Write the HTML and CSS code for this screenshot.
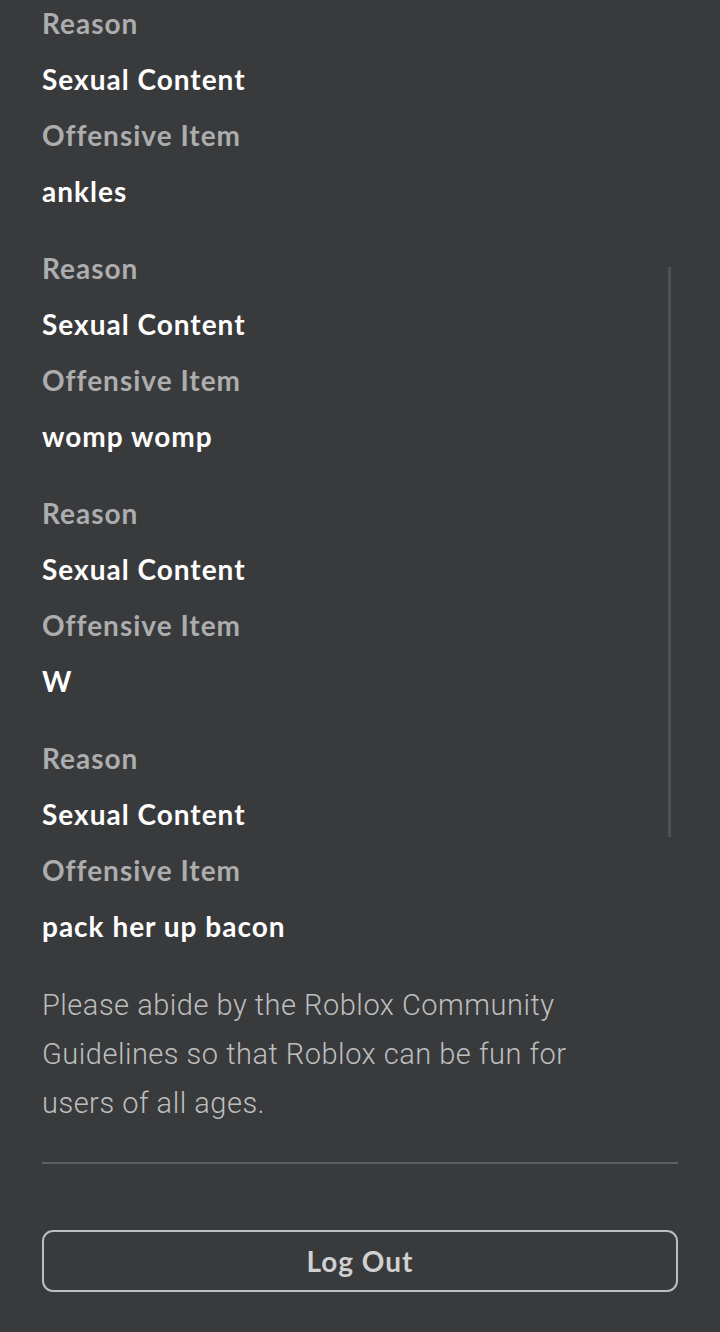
FILE: index.html
```html
<!DOCTYPE html>
<html>
<head>
  <title>Account moderation</title>
  <link rel="stylesheet" href="styles.css">
</head>
<body>
  <div class="page">
    <div class="reports">
      <div class="report">
        <div class="label">Reason</div>
        <div class="value">Sexual Content</div>
        <div class="label">Offensive Item</div>
        <div class="value">ankles</div>
      </div>
      <div class="report">
        <div class="label">Reason</div>
        <div class="value">Sexual Content</div>
        <div class="label">Offensive Item</div>
        <div class="value">womp womp</div>
      </div>
      <div class="report">
        <div class="label">Reason</div>
        <div class="value">Sexual Content</div>
        <div class="label">Offensive Item</div>
        <div class="value">W</div>
      </div>
      <div class="report">
        <div class="label">Reason</div>
        <div class="value">Sexual Content</div>
        <div class="label">Offensive Item</div>
        <div class="value">pack her up bacon</div>
      </div>
    </div>

    <p class="notice">Please abide by the Roblox Community Guidelines so that Roblox can be fun for users of all ages.</p>

    <hr class="divider">

    <button class="logout">Log Out</button>
  </div>

  <!-- scroll indicator -->
  <div class="scrollbar"></div>
</body>
</html>
```

FILE: styles.css
```css
body {
  margin: 0;
  background-color: #393a3c;
  font-family: Lato, "Noto Sans", sans-serif;
  height: 1332px;
  overflow: hidden;
}
.page {
  padding: 0 42px;
  margin-top: -5px;
}
.reports {
  display: flex;
  flex-direction: column;
  gap: 21px;
}
.label, .value {
  height: 56px;
  line-height: 56px;
  font-size: 28px;
  font-weight: 700;
  letter-spacing: 1px;
  white-space: nowrap;
}
.label { color: #acadae; }
.value { color: #ffffff; }
.notice {
  margin: 27px 0 0;
  font-family: Roboto, sans-serif;
  font-weight: 300;
  font-size: 29px;
  letter-spacing: 0.5px;
  line-height: 49px;
  color: #bdbebf;
  width: 545px;
}
.divider {
  border: none;
  border-top: 2px solid #5d5e60;
  margin: 34px 0 0;
}
.logout {
  display: block;
  width: 100%;
  height: 62px;
  margin-top: 66px;
  background: transparent;
  border: 2px solid #bcbdbe;
  border-radius: 11px;
  color: #cfd0d1;
  font-family: Lato, sans-serif;
  font-weight: 700;
  font-size: 28px;
  letter-spacing: 1px;
}
.scrollbar {
  position: absolute;
  left: 668px;
  top: 267px;
  width: 3px;
  height: 570px;
  background: #4f5052;
}
```
